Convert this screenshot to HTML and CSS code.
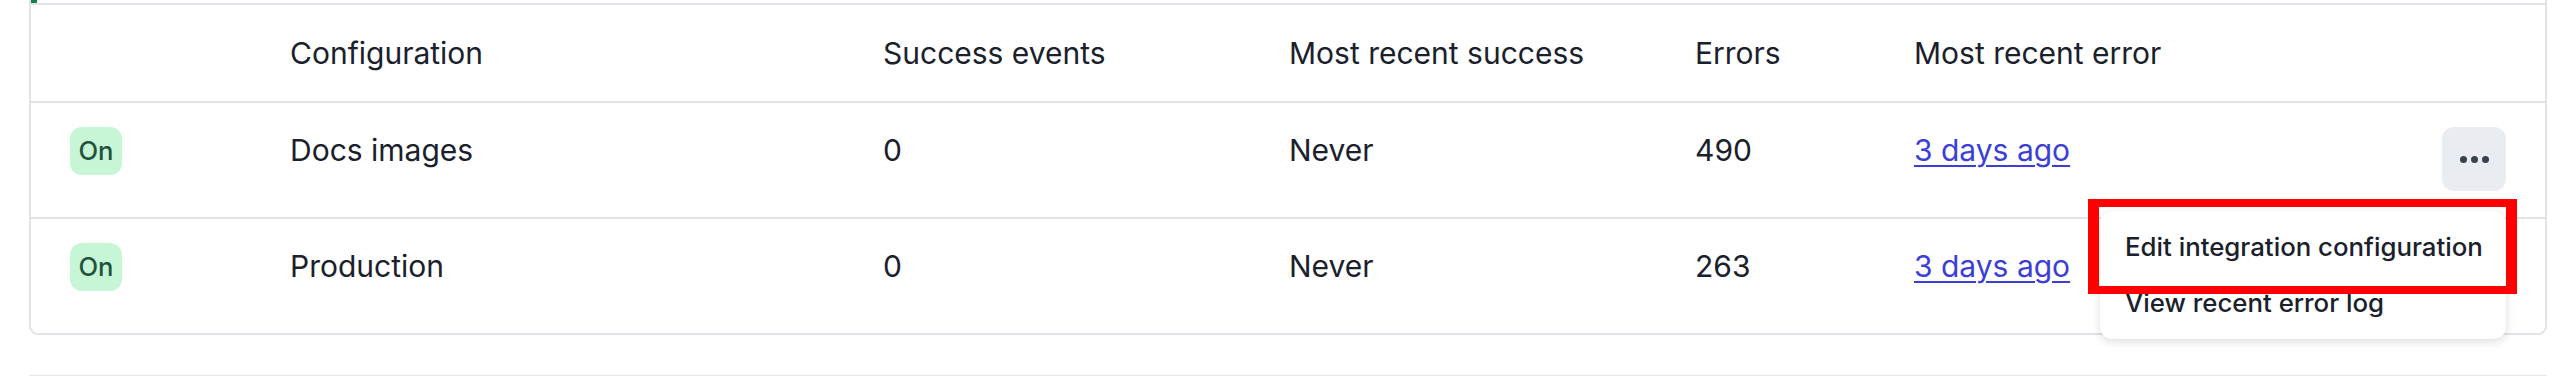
FILE: index.html
```html
<!DOCTYPE html>
<html lang="en">
<head>
<meta charset="utf-8">
<title>Integrations</title>
<link rel="stylesheet" href="styles.css">
</head>
<body>
<div class="page">
  <div class="card">
    <div class="strip"><span class="strip-mark"></span></div>
    <table class="table">
      <colgroup>
        <col class="c-status"><col class="c-config"><col class="c-success"><col class="c-recent"><col class="c-errors"><col class="c-error"><col class="c-actions">
      </colgroup>
      <thead>
        <tr>
          <th></th>
          <th>Configuration</th>
          <th>Success events</th>
          <th>Most recent success</th>
          <th>Errors</th>
          <th>Most recent error</th>
          <th></th>
        </tr>
      </thead>
      <tbody>
        <tr>
          <td><span class="badge">On</span></td>
          <td>Docs images</td>
          <td>0</td>
          <td>Never</td>
          <td>490</td>
          <td><a class="link" href="#">3 days ago</a></td>
          <td class="actions"><button class="more" aria-label="More"><span class="dot"></span><span class="dot"></span><span class="dot"></span></button></td>
        </tr>
        <tr>
          <td><span class="badge">On</span></td>
          <td>Production</td>
          <td>0</td>
          <td>Never</td>
          <td>263</td>
          <td><a class="link" href="#">3 days ago</a></td>
          <td class="actions"><button class="more" aria-label="More"><span class="dot"></span><span class="dot"></span><span class="dot"></span></button></td>
        </tr>
      </tbody>
    </table>
  </div>
  <div class="next-section"></div>

  <div class="menu">
    <div class="menu-item">Edit integration configuration</div>
    <div class="menu-item">View recent error log</div>
  </div>
  <div class="highlight"></div>
</div>
</body>
</html>
```
FILE: styles.css
```css
* { box-sizing: border-box; }

html, body {
  margin: 0;
  padding: 0;
  background: #ffffff;
}

body {
  font-family: Inter, "Noto Sans", "Liberation Sans", sans-serif;
  color: #1a202c;
  font-size: 30px;
  line-height: 46px;
}

.page {
  position: relative;
  padding: 0 29px;
}

.card {
  border: 2px solid #e0e4e9;
  border-top: none;
  border-radius: 0 0 9px 9px;
  overflow: hidden;
}

.strip {
  height: 3px;
}

.strip-mark {
  display: block;
  width: 6px;
  height: 3px;
  background: #17804a;
}

.table {
  width: 100%;
  border-collapse: collapse;
  table-layout: fixed;
}

.c-status { width: 220px; }
.c-config { width: 593px; }
.c-success { width: 406px; }
.c-recent { width: 406px; }
.c-errors { width: 219px; }
.c-error { width: 528px; }
.c-actions { width: 142px; }

th {
  font-weight: 400;
  text-align: left;
  height: 98px;
  padding: 0 39px;
  vertical-align: middle;
  border-top: 2px solid #e0e4e9;
  border-bottom: 2px solid #e0e4e9;
  white-space: nowrap;
}

td {
  padding: 24px 39px 26px;
  vertical-align: top;
  border-bottom: 2px solid #e0e4e9;
  white-space: nowrap;
}

tbody tr:last-child td {
  border-bottom: none;
}

.badge {
  display: inline-flex;
  align-items: center;
  justify-content: center;
  width: 52px;
  height: 48px;
  border-radius: 12px;
  background: #c6f6d5;
  color: #22543d;
  font-size: 25.6px;
  font-weight: 500;
  line-height: 1;
  vertical-align: top;
}

.link {
  color: #3b3fd8;
  text-decoration: underline;
  text-decoration-thickness: 2px;
  text-underline-offset: 4px;
}

.actions {
  text-align: right;
}

.more {
  display: inline-flex;
  align-items: center;
  justify-content: center;
  gap: 4px;
  width: 64px;
  height: 64px;
  padding: 0;
  border: none;
  border-radius: 12px;
  background: #e9edf1;
  vertical-align: top;
}

.dot {
  width: 7px;
  height: 7px;
  border-radius: 50%;
  background: #3a414e;
}

.next-section {
  margin-top: 40px;
  border-top: 2px solid #e3e6ea;
}

.menu {
  position: absolute;
  left: 2100px;
  top: 211px;
  width: 406px;
  padding: 8px 0;
  background: #ffffff;
  border-radius: 12px;
  box-shadow: 0 3px 10px rgba(0, 0, 0, 0.13), 0 0 1px rgba(0, 0, 0, 0.08);
}

.menu-item {
  padding: 7px 25px;
  font-size: 25.8px;
  font-weight: 500;
  line-height: 42px;
  color: #1a202c;
  white-space: nowrap;
}

.highlight {
  position: absolute;
  left: 2088px;
  top: 199px;
  width: 429px;
  height: 95px;
  border-style: solid;
  border-color: #ff0000;
  border-width: 8px 11px;
}
```
